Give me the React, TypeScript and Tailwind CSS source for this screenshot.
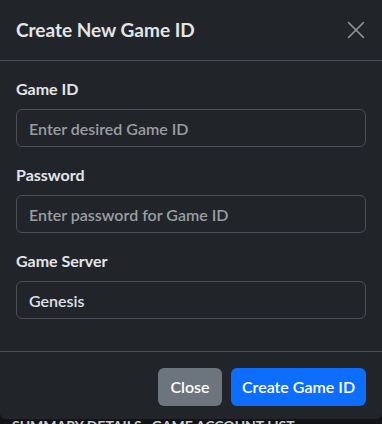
import React from "react";

const fields = [
  { label: "Game ID", placeholder: "Enter desired Game ID", value: "" },
  { label: "Password", placeholder: "Enter password for Game ID", value: "" },
  { label: "Game Server", placeholder: "", value: "Genesis" },
];

export default function App() {
  return (
    <div
      className="w-[382px] h-[424px] overflow-hidden bg-[#121416] text-[#dee2e6]"
      style={{ fontFamily: "Lato, 'Noto Sans', sans-serif" }}
    >
      <div className="bg-[#212529] rounded-b-md">
        {/* header */}
        <div className="flex items-center justify-between px-4 h-[61px] border-b border-[#495057]">
          <h5 className="text-[19px] font-bold leading-[30px] text-[#e3e5e8]">Create New Game ID</h5>
          <button className="w-[18px] h-[18px] mr-[1px] text-[#8d9094]">
            <svg viewBox="0 0 16 16" className="w-full h-full" fill="none" stroke="currentColor" strokeWidth="1.3">
              <path d="M1 1L15 15M15 1L1 15" />
            </svg>
          </button>
        </div>

        {/* body */}
        <div className="px-4 pt-4 pb-8 flex flex-col gap-4">
          {fields.map((f) => (
            <div key={f.label}>
              <label className="block text-[16px] font-bold leading-6 mb-2 text-[#e3e5e8]">{f.label}</label>
              <input
                readOnly
                value={f.value}
                placeholder={f.placeholder}
                className="w-full h-[38px] px-3 rounded-md border border-[#495057] bg-[#212529] text-[16px] font-semibold text-[#dee2e6] placeholder:text-[#9a9ea2] outline-none"
              />
            </div>
          ))}
        </div>

        {/* footer */}
        <div className="flex justify-end gap-[9px] px-4 pt-4 pb-[13px] border-t border-[#495057]">
          <button className="h-[38px] w-[64px] rounded-md bg-[#6c757d] text-white text-[16px] font-semibold">Close</button>
          <button className="h-[38px] w-[135px] rounded-md bg-[#0d6efd] text-white text-[16px] font-semibold whitespace-nowrap">Create Game ID</button>
        </div>
      </div>
      <div className="px-3 text-[14px] leading-none font-bold text-[#c9ccd0] whitespace-nowrap">
        SUMMARY DETAILS &nbsp; GAME ACCOUNT LIST
      </div>
    </div>
  );
}
